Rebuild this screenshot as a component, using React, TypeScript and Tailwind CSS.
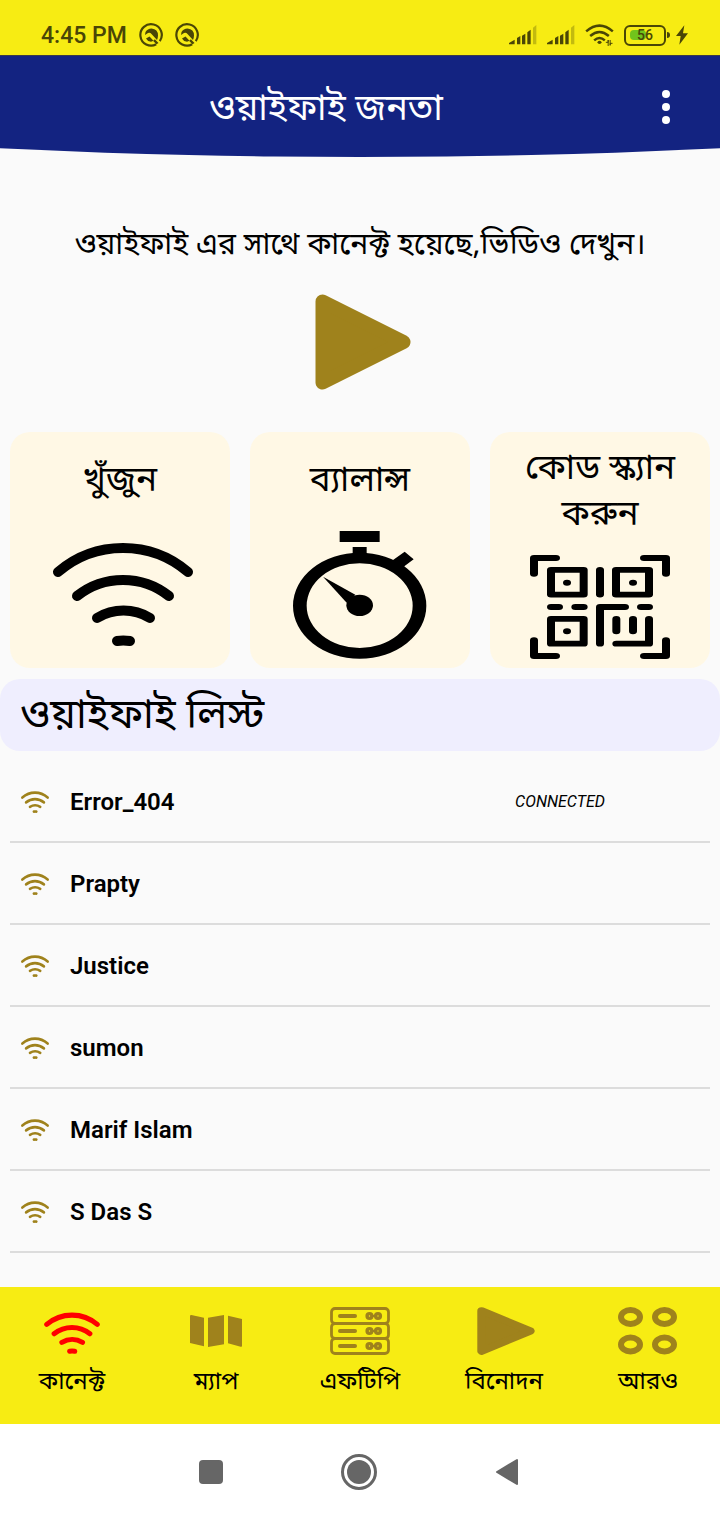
import React from "react";

const LATIN = "font-['Roboto',sans-serif]";

function WifiIcon({ className, stroke = 10 }: { className: string; stroke?: number }) {
  return (
    <svg viewBox="0 0 144 108" preserveAspectRatio="none" aria-hidden="true" className={className} fill="none" stroke="currentColor" strokeWidth={stroke} strokeLinecap="round">
      <path d="M7 32A100 100 0 0 1 137 32" />
      <path d="M26 56A74 74 0 0 1 118 56" />
      <path d="M46 78A51 51 0 0 1 99 78" />
      <path d="M66 101Q72 100 79 101" />
    </svg>
  );
}

function PlayIcon({ className }: { className: string }) {
  return (
    <svg viewBox="0 0 96 96" preserveAspectRatio="none" aria-hidden="true" className={className} fill="currentColor" stroke="currentColor" strokeWidth="14" strokeLinejoin="round">
      <path d="M7.500 7.500L88.500 48L7.500 88.500Z" />
    </svg>
  );
}

function StopwatchIcon({ className }: { className: string }) {
  return (
    <svg viewBox="0 0 402 390" aria-hidden="true" className={className} fill="currentColor">
      <path d="M140 3h120v33h-120zM179 51h42v26h-42zM335 65l27 23-27 20-10 16-28-32z" />
      <path fillRule="evenodd" d="M0 227a200 159 0 1 0 400 0a200 159 0 1 0-400 0zM41 227a159 127 0 1 0 318 0a159 127 0 1 0-318 0z" />
      <ellipse cx="200" cy="226" rx="40" ry="32" />
      <path d="M90 140L187 194L161 218Z" />
    </svg>
  );
}

function QrIcon({ className }: { className: string }) {
  return (
    <svg viewBox="0 0 420 420" preserveAspectRatio="none" aria-hidden="true" className={className} fill="none" stroke="currentColor" strokeWidth="24" strokeLinecap="round" strokeLinejoin="round">
      <path d="M12 76V12H78M342 12H408V76M12 344V408H78M342 408H408V344" />
      <path d="M63 60H161V160H63ZM258 60H357V160H258ZM63 258H161V358H63Z" />
      <path d="M210 60V160M63 210H87M136 210H161M333 210H357M210 358V210H285" />
      <path d="M259 258V308M309 258V308M357 258V358H259" />
      <path d="M111 112h.1M309 112h.1M111 308h.1" />
    </svg>
  );
}

function MapIcon({ className }: { className: string }) {
  return (
    <svg viewBox="0 0 156 96" aria-hidden="true" className={className} fill="currentColor">
      <path d="M0 2Q0 0 4 0L42 8V94L0 84ZM54 8L102 0V88L54 96ZM114 2L156 12V93Q156 96 152 95L114 85Z" />
    </svg>
  );
}

function ServerIcon({ className }: { className: string }) {
  return (
    <svg viewBox="0 0 60 48" aria-hidden="true" className={className} fill="none" stroke="currentColor">
      {[1.5, 16.5, 31.5].map((y) => (
        <g key={y} strokeWidth="2.800">
          <rect x="1.500" y={y} width="57" height="15" rx="3.500" />
          <path d={`M10 ${y + 7.5}H25`} strokeWidth="4" strokeLinecap="round" />
          <circle cx="39.500" cy={y + 7.5} r="2.400" strokeWidth="3.400" />
          <circle cx="48" cy={y + 7.5} r="2.400" strokeWidth="3.400" />
          <path d={`M42 ${y + 7.5}H45`} strokeWidth="2" />
        </g>
      ))}
    </svg>
  );
}

function MoreIcon({ className }: { className: string }) {
  return (
    <svg viewBox="0 0 60 48" aria-hidden="true" className={className} fill="none" stroke="currentColor" strokeWidth="6">
      <ellipse cx="12.500" cy="10" rx="9.500" ry="7" />
      <ellipse cx="46.500" cy="10" rx="9.500" ry="7" />
      <ellipse cx="12.500" cy="37.500" rx="9.500" ry="7" />
      <ellipse cx="46.500" cy="37.500" rx="9.500" ry="7" />
    </svg>
  );
}

function AppBadge() {
  return (
    <svg viewBox="0 0 24 24" aria-hidden="true" className="size-6">
      <path d="M17.200 21.300A10.700 10.700 0 1 1 20.800 18.100" fill="none" stroke="currentColor" strokeWidth="2.200" />
      <path d="M6.500 9Q8.500 5.500 12.500 5.500Q19 6 19 12.500Q19 14.500 18 17L12.500 11Q11 9 9 10L6 12Z" fill="currentColor" />
      <path d="M7 15.500L10.500 13.500L14.500 17.800L12 18.800Q8.500 18.500 7 15.500ZM15.800 16.200L19.500 20L17.500 21.300L14.200 18Z" fill="currentColor" />
    </svg>
  );
}

function SignalIcon({ className }: { className: string }) {
  return (
    <svg viewBox="0 0 84 60" aria-hidden="true" className={className} fill="currentColor">
      <path d="M0 58V54L17 44V58ZM24 39L34 33V58H24ZM39 32L49 26V58H39ZM55 22L65 14V58H55Z" />
      <path d="M72 8L82 0V58H72Z" opacity=".3" />
    </svg>
  );
}

function StatusWifi({ className }: { className: string }) {
  return (
    <svg viewBox="0 0 86 66" aria-hidden="true" className={className} fill="none" stroke="currentColor" strokeWidth="7.500">
      <path d="M3 22Q43-12 83 22M15 36Q43 12 71 36M27 49Q43 35 59 49" />
      <ellipse cx="43" cy="55" rx="6" ry="5" fill="currentColor" stroke="none" />
      <path d="M62 55H69V48V66M82 58H75V64V48" strokeWidth="3" />
    </svg>
  );
}

function StatusBar() {
  return (
    <div className={`flex h-14 items-center justify-between border-b border-[#3a3a4a] bg-[#f7ec13] pl-[41px] pr-8 pt-[15px] text-[#4a4606] ${LATIN}`}>
      <div className="flex items-center gap-3">
        <span className="pt-px text-[23px] font-medium leading-6">4:45 PM</span>
        <AppBadge />
        <AppBadge />
      </div>
      <div className="flex items-center gap-[10px]">
        <SignalIcon className="h-5 w-7" />
        <SignalIcon className="h-5 w-7" />
        <StatusWifi className="h-[22px] w-[29px]" />
        <div className="flex items-center gap-px">
          <div className="relative flex h-[21px] w-[42px] items-center justify-center rounded-md border-2 border-current">
            <span className="absolute left-1 h-[10px] w-4 rounded-sm bg-[#71c41c]" />
            <span className="relative text-sm font-medium leading-4">56</span>
          </div>
          <span className="h-[6px] w-[3px] rounded-r-sm bg-current" />
          <svg viewBox="0 0 36 58" aria-hidden="true" className="ml-[5px] h-5 w-3" fill="currentColor">
            <path d="M25 0L0 32H14L10 58L36 24H21Z" />
          </svg>
        </div>
      </div>
    </div>
  );
}

const networks = [
  { name: "Error_404", connected: true },
  { name: "Prapty", connected: false },
  { name: "Justice", connected: false },
  { name: "sumon", connected: false },
  { name: "Marif Islam", connected: false },
  { name: "S Das S", connected: false },
];

const tabs = [
  { label: "কানেক্ট", icon: <WifiIcon className="mt-1 h-[42px] w-14 text-[#ff0000]" stroke={13} /> },
  { label: "ম্যাপ", icon: <MapIcon className="h-8 w-[52px]" /> },
  { label: "এফটিপি", icon: <ServerIcon className="h-12 w-[60px]" /> },
  { label: "বিনোদন", icon: <PlayIcon className="ml-[3px] h-12 w-[58px]" /> },
  { label: "আরও", icon: <MoreIcon className="h-12 w-[60px]" /> },
];

function ActionCard({ label, children }: { label: string; children: React.ReactNode }) {
  return (
    <button type="button" className="flex h-[236px] flex-col items-center rounded-[20px] bg-[#fff8e5] px-4 pb-2 pt-[15px]">
      <span className="flex min-h-[70px] items-center text-center text-[35px] leading-[46px]">{label}</span>
      <span className="flex flex-1 items-end">{children}</span>
    </button>
  );
}

export default function App() {
  return (
    <div className="flex min-h-screen flex-col bg-[#fafafa] font-['Noto_Sans_Bengali','Noto_Sans',sans-serif] text-black">
      <StatusBar />
      <header className="flex h-[101px] items-center bg-[#132381] pr-10 text-white [clip-path:ellipse(122%_100%_at_50%_0)]">
        <h1 className="flex-1 pt-2 text-center text-[36px] leading-[46px]">ওয়াইফাই জনতা</h1>
        <button type="button" aria-label="মেনু" className="flex h-12 w-7 flex-col items-center justify-center gap-[5px]">
          <span className="size-2 rounded-full bg-white" />
          <span className="size-2 rounded-full bg-white" />
          <span className="size-2 rounded-full bg-white" />
        </button>
      </header>

      <main className="flex-1">
        <p className="pt-[66px] text-center text-[30px] leading-[46px]">ওয়াইফাই এর সাথে কানেক্ট হয়েছে,ভিডিও দেখুন।</p>
        <button type="button" aria-label="ভিডিও দেখুন" className="mx-auto mt-[25px] block pl-[5px] text-[#9f821c]">
          <PlayIcon className="size-24" />
        </button>

        <div className="mt-[42px] grid grid-cols-3 gap-5 px-[10px]">
          <ActionCard label="খুঁজুন">
            <WifiIcon className="mb-3 ml-[5px] h-[108px] w-36" />
          </ActionCard>
          <ActionCard label="ব্যালান্স">
            <StopwatchIcon className="h-[130px] w-[134px]" />
          </ActionCard>
          <ActionCard label="কোড স্ক্যান করুন">
            <QrIcon className="mb-px h-[104px] w-[140px]" />
          </ActionCard>
        </div>

        <h2 className="mt-[11px] flex h-[72px] items-center rounded-[20px] bg-[#efeefe] px-5 pt-[6px] text-[41px] leading-[56px]">ওয়াইফাই লিস্ট</h2>

        <ul className={`mt-[10px] px-[10px] pb-[34px] ${LATIN}`}>
          {networks.map((n) => (
            <li key={n.name} className="flex h-[82px] items-center border-b-2 border-[#dcdcdc] pl-[11px] pr-[105px] pt-[2px]">
              <WifiIcon className="h-[22px] w-7 shrink-0 text-[#9f821c]" stroke={13} />
              <span className="ml-[21px] flex-1 text-2xl font-semibold">{n.name}</span>
              {n.connected && <span className="text-base italic">CONNECTED</span>}
            </li>
          ))}
        </ul>
      </main>

      <nav className="grid h-[137px] grid-cols-5 bg-[#f7ec13]">
        {tabs.map((t) => (
          <button key={t.label} type="button" className="flex flex-col items-center pt-5">
            <span className="flex h-12 items-center text-[#9f821c]">{t.icon}</span>
            <span className="mt-[10px] text-2xl leading-9">{t.label}</span>
          </button>
        ))}
      </nav>

      <div className="flex h-24 items-center justify-center bg-white pr-[2px] text-[#666666]">
        <button type="button" aria-label="সাম্প্রতিক" className="flex w-[148px] justify-center">
          <span className="size-6 rounded-sm bg-current" />
        </button>
        <button type="button" aria-label="হোম" className="flex w-[148px] justify-center">
          <span className="flex size-9 items-center justify-center rounded-full border-[3px] border-current">
            <span className="size-6 rounded-full bg-current" />
          </span>
        </button>
        <button type="button" aria-label="ফিরে যান" className="flex w-[148px] justify-center">
          <svg viewBox="0 0 24 28" aria-hidden="true" className="h-7 w-6" fill="currentColor" stroke="currentColor" strokeWidth="2" strokeLinejoin="round">
            <path d="M22 2V26L2 14Z" />
          </svg>
        </button>
      </div>
    </div>
  );
}
